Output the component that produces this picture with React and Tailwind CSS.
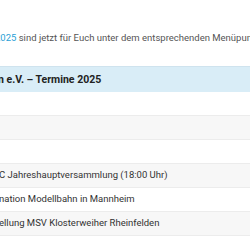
const rows = [
  { text: "", striped: false },
  { text: "", striped: true },
  { text: "", striped: false },
  { text: "C Jahreshauptversammlung (18:00 Uhr)", striped: true },
  { text: "nation Modellbahn in Mannheim", striped: false },
  { text: "ellung MSV Klosterweiher Rheinfelden", striped: true },
];

export default function App() {
  return (
    <div className="w-[250px] h-[250px] overflow-hidden bg-white font-['Roboto',sans-serif] text-[9.5px] text-[#444]">
      {/* intro line */}
      <p className="mt-[29px] h-[17px] leading-[17px] whitespace-nowrap ml-[-5px] text-[#555]">
        <span className="text-[#2a9fd6]">2025</span> sind jetzt für Euch unter dem entsprechenden Menüpunkt
      </p>

      {/* events table */}
      <div className="mt-[20px]">
        <div className="h-[26px] bg-[#d9edf7] border-t border-[#cfe3ee] flex items-center whitespace-nowrap">
          <span className="ml-[-2px] font-bold text-[10.5px] text-[#222]">n e.V. – Termine 2025</span>
        </div>
        {rows.map((row, i) => (
          <div
            key={i}
            className={`h-[24px] border-b border-[#ececec] flex items-center whitespace-nowrap ${
              row.striped ? "bg-[#f7f7f7]" : "bg-white"
            }`}
          >
            <span className="ml-[-1px] text-[#333]">{row.text}</span>
          </div>
        ))}
      </div>
    </div>
  );
}
